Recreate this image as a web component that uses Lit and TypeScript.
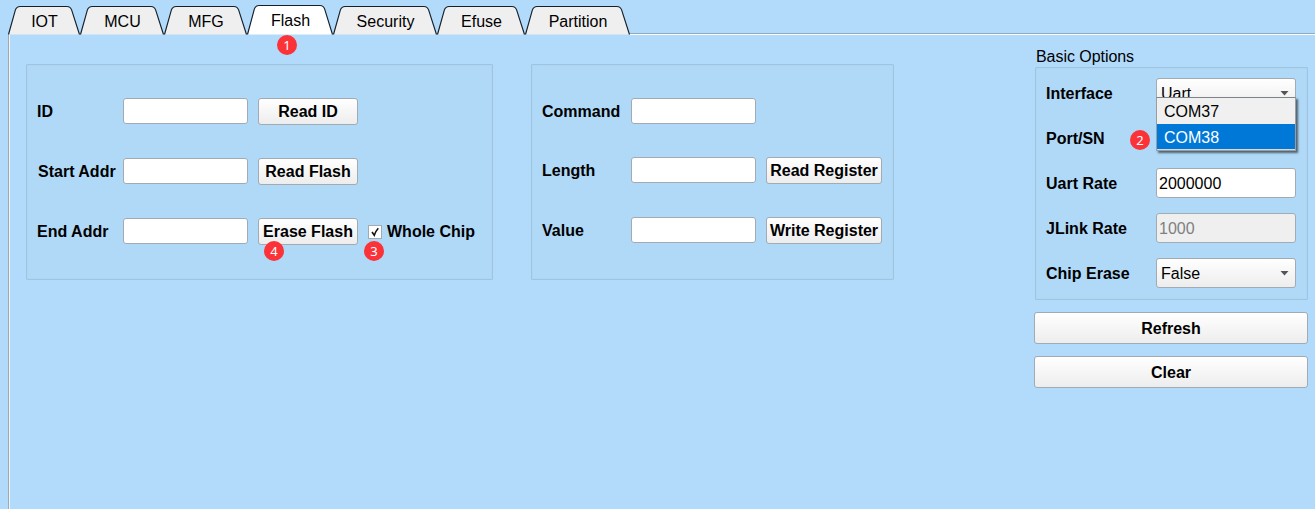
import { LitElement, html, svg, css } from "lit";
import { customElement, property } from "lit/decorators.js";
import { classMap } from "lit/directives/class-map.js";

interface Tab {
  name: string;
  width: number;
  active?: boolean;
}

const TABS: Tab[] = [
  { name: "IOT", width: 72 },
  { name: "MCU", width: 84 },
  { name: "MFG", width: 83 },
  { name: "Flash", width: 86, active: true },
  { name: "Security", width: 104 },
  { name: "Efuse", width: 88 },
  { name: "Partition", width: 105 },
];

@customElement("tab-strip")
class TabStrip extends LitElement {
  static styles = css`
    :host { display: flex; height: 35px; padding-left: 8px; box-sizing: border-box; }
    .tab { display: grid; height: 35px; flex: none; }
    .tab > * { grid-area: 1 / 1; }
    .shape { display: block; overflow: visible; }
    .label { text-align: center; line-height: 18px; padding-top: 13px; padding-left: 1px; }
    .active .label { padding-top: 12px; }
    .rule { flex: 1; height: 1px; margin-top: 33px; background: #93abc0; border-bottom: 1px solid #fff; }
  `;

  private shape(tab: Tab) {
    const w = tab.width;
    const t = tab.active ? 5.5 : 6.5;
    const d = `M0.5 34.5 L7.4 ${t + 3.4} Q8.8 ${t} 12 ${t} H${w - 13} Q${w - 9.6} ${t} ${w - 8.4} ${t + 3.4} L${w - 0.5} 34.5`;
    return svg`<path d=${d} fill=${tab.active ? "#ffffff" : "#efefef"} stroke="#16202a" stroke-width="1.15"></path>`;
  }

  render() {
    return html`${TABS.map(
      (tab) => html`<div class=${classMap({ tab: true, active: !!tab.active })}>
        <svg class="shape" width=${tab.width} height="35">${this.shape(tab)}</svg>
        <span class="label">${tab.name}</span>
      </div>`
    )}<div class="rule"></div>`;
  }
}

@customElement("step-badge")
class StepBadge extends LitElement {
  static styles = css`
    :host {
      display: block; width: 20px; height: 20px; border-radius: 50%;
      background: #fb3238; color: #fff; text-align: center;
      font: 13px/20px "Noto Sans", "Open Sans", sans-serif;
    }
  `;
  render() {
    return html`<slot></slot>`;
  }
}

@customElement("combo-box")
class ComboBox extends LitElement {
  @property() value = "";
  static styles = css`
    :host {
      display: flex; align-items: center; justify-content: space-between;
      box-sizing: border-box; height: 30px; padding: 0 6px 0 4px;
      border: 1px solid #a3abb2; border-radius: 3px;
      background: linear-gradient(#fff, #ededed);
    }
    .value { padding-top: 2px; }
    .arrow { display: block; }
  `;
  render() {
    return html`<span class="value">${this.value}</span>
      <svg class="arrow" width="9" height="5"><path d="M0.5 0 H8.5 L4.5 4.5 Z" fill="#555"></path></svg>`;
  }
}

@customElement("app-root")
class AppRoot extends LitElement {
  static styles = css`
    :host {
      display: flex; flex-direction: column; height: 509px; overflow: hidden;
      background: #b2dbfb; color: #000;
      font: 16px/18px "Liberation Sans", Arial, sans-serif;
    }
    .pane {
      flex: 1; display: flex; align-items: flex-start; margin-left: 8px;
      border-left: 1px solid #a3a9ae; box-shadow: inset 1px 0 #edf5fc;
      padding: 0 7px 0 17px;
    }
    .group {
      box-sizing: border-box; border: 1px solid #9fc4e0; background: #b0d9f7;
      border-radius: 1px; box-shadow: inset 0 0 0 1px #aed6f3;
    }
    .memory, .registers {
      display: grid; height: 216px; margin-top: 29px;
      align-content: start; align-items: start; column-gap: 10px;
    }
    .memory {
      width: 467px; padding: 33px 0 0 10px;
      grid-template-columns: 76px 125px 100px auto; grid-auto-rows: 60px;
    }
    .registers {
      width: 363px; margin-left: 38px; padding: 33px 0 0 10px;
      grid-template-columns: 79px 125px 116px; grid-template-rows: 59px 60px 60px;
    }
    .label { font-weight: bold; white-space: nowrap; padding-top: 5px; }
    .nudge { padding-left: 1px; }
    .field {
      box-sizing: border-box; height: 26px; background: #fff;
      border: 1px solid #a3abb2; border-radius: 3px;
    }
    .btn {
      box-sizing: border-box; height: 27px; padding: 0; margin: 0;
      border: 1px solid #a3abb2; border-radius: 3px;
      background: linear-gradient(#fff, #ededed);
      font: bold 16px/18px "Liberation Sans", Arial, sans-serif; color: #000;
      text-align: center; white-space: nowrap;
    }
    .anchor { position: relative; display: grid; }
    .check { display: flex; align-items: center; gap: 5px; height: 27px; font-weight: bold; white-space: nowrap; }
    .box {
      box-sizing: border-box; width: 14px; height: 14px;
      background: #fff; border: 1px solid #a3abb2;
    }
    .tick { display: block; }
    .badge { position: absolute; }
    .b1 { left: 277px; top: 35px; }
    .b2 { left: -26px; top: 7px; }
    .b3 { left: -4px; top: 23px; }
    .b4 { left: 6px; top: 23px; }
    .side { width: 274px; margin-left: auto; display: flex; flex-direction: column; padding-top: 13px; }
    .title { padding-left: 2px; height: 19px; letter-spacing: -0.05px; }
    .options {
      display: grid; grid-template-columns: 110px 140px; grid-auto-rows: 30px; row-gap: 15px;
      margin-left: 1px; height: 233px; padding: 10px 0 0 10px; align-content: start;
    }
    .options .label { padding-top: 7px; }
    .entry {
      box-sizing: border-box; height: 30px; padding: 6px 2px; background: #fff;
      border: 1px solid #a3abb2; border-radius: 3px;
    }
    .disabled { background: #efefef; color: #808080; }
    .menu {
      position: absolute; left: 0; top: -26px; width: 140px; height: 54px;
      box-sizing: border-box; border: 1px solid #9a9ea2; border-top-color: #7f8488; background: #d8dadc;
      box-shadow: 2px 2px 2px rgba(0, 0, 0, 0.55);
    }
    .item { height: 26px; line-height: 27px; padding-left: 7px; background: #f0f0f0; }
    .item.selected { height: 25px; background: #0078d7; color: #fff; }
    .wide { height: 32px; margin-top: 12px; padding-top: 1px; }
  `;

  private row(label: string, button?: string) {
    return html`<span class="label">${label}</span>
      <div class="field"></div>
      ${button ? html`<button class="btn">${button}</button>` : html`<span></span>`}`;
  }

  render() {
    return html`
      <tab-strip></tab-strip>
      <div class="pane">
        <section class="group memory">
          ${this.row("ID", "Read ID")}<span></span>
          <span class="label nudge">Start Addr</span>
          <div class="field"></div>
          <button class="btn">Read Flash</button><span></span>
          <span class="label">End Addr</span>
          <div class="field"></div>
          <div class="anchor">
            <button class="btn">Erase Flash</button>
            <step-badge class="badge b4">4</step-badge>
          </div>
          <div class="anchor">
            <div class="check">
              <span class="box"><svg class="tick" width="12" height="12"><path d="M3 6 L5.3 9.2 Q6.8 4.8 9.3 2.2" fill="none" stroke="#111" stroke-width="1.6"></path></svg></span>
              <span>Whole Chip</span>
            </div>
            <step-badge class="badge b3">3</step-badge>
          </div>
        </section>
        <section class="group registers">
          ${this.row("Command")} ${this.row("Length", "Read Register")} ${this.row("Value", "Write Register")}
        </section>
        <aside class="side">
          <div class="title">Basic Options</div>
          <div class="group options">
            <span class="label">Interface</span>
            <combo-box value="Uart"></combo-box>
            <span class="label">Port/SN</span>
            <div class="anchor">
              <div class="menu">
                <div class="item">COM37</div>
                <div class="item selected">COM38</div>
              </div>
              <step-badge class="badge b2">2</step-badge>
            </div>
            <span class="label">Uart Rate</span>
            <div class="entry">2000000</div>
            <span class="label">JLink Rate</span>
            <div class="entry disabled">1000</div>
            <span class="label">Chip Erase</span>
            <combo-box value="False"></combo-box>
          </div>
          <button class="btn wide">Refresh</button>
          <button class="btn wide">Clear</button>
        </aside>
      </div>
      <step-badge class="badge b1">1</step-badge>
    `;
  }
}
